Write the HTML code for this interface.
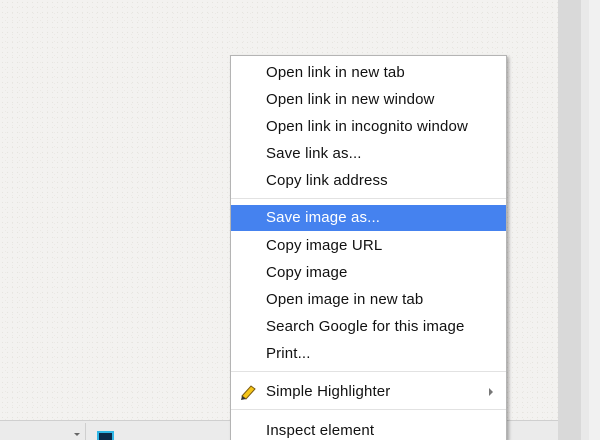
<!DOCTYPE html>
<html style="width:600px;height:440px;overflow:hidden"><head><meta charset="utf-8"><style>
*{margin:0;padding:0;box-sizing:border-box}
body{width:600px;height:440px;overflow:hidden;position:relative;background:#f1f0ee;font-family:"Liberation Sans",sans-serif}
.tex{position:absolute;left:0;top:0;width:558px;height:420px;background:#f3f2f0;
background-image:radial-gradient(#e6e4df 0.5px,transparent 0.8px),radial-gradient(#ebe9e5 0.5px,transparent 0.8px);
background-size:5px 5px,7px 7px;background-position:0 0,2px 3px}
.s1{position:absolute;left:558px;top:0;width:23px;height:440px;background:#d9d9d9}
.s2{position:absolute;left:581px;top:0;width:8px;height:440px;background:#e9e9e9}
.s3{position:absolute;left:589px;top:0;width:11px;height:440px;background:#f1f1f1}
.bar{position:absolute;left:0;top:420px;width:558px;height:20px;background:#ebebeb;border-top:1px solid #cfcfcf}
.menu{position:absolute;left:230px;top:55px;width:277px;height:385px;background:#fff;border:1px solid #b4b4b4;border-bottom:none;box-shadow:2px 2px 3px rgba(0,0,0,.3)}
.it{position:absolute;left:0;width:275px;height:26px;line-height:26px;padding-left:35px;font-size:15px;letter-spacing:0.15px;color:#111}
.hl{background:#4582ef;color:#fff}
.sep{position:absolute;left:0;width:275px;height:1px;background:#e2e2e2}
</style></head><body>
<div class="tex"></div><div class="s1"></div><div class="s2"></div><div class="s3"></div>
<div class="bar">
<div style="position:absolute;left:85px;top:2px;width:1px;height:18px;background:#cfcfcf"></div>
<div style="position:absolute;left:74px;top:12px;border-left:3px solid transparent;border-right:3px solid transparent;border-top:3px solid #666"></div>
<div style="position:absolute;left:97px;top:10px;width:17px;height:12px;background:#0b2a4a;border:2px solid #2fb6e6"></div>
</div>
<div class="menu">
<div class="it" style="top:4px">Open link in new tab</div>
<div class="it" style="top:31px">Open link in new window</div>
<div class="it" style="top:58px">Open link in incognito window</div>
<div class="it" style="top:85px">Save link as...</div>
<div class="it" style="top:112px">Copy link address</div>
<div class="sep" style="top:142px"></div>
<div class="it hl" style="top:149px">Save image as...</div>
<div class="it" style="top:177px">Copy image URL</div>
<div class="it" style="top:204px">Copy image</div>
<div class="it" style="top:231px">Open image in new tab</div>
<div class="it" style="top:258px">Search Google for this image</div>
<div class="it" style="top:285px">Print...</div>
<div class="sep" style="top:315px"></div>
<div class="it" style="top:323px">Simple Highlighter</div>
<svg style="position:absolute;left:8px;top:327px" width="18" height="18" viewBox="0 0 18 18"><path d="M3 13 L12 3 L16 6 L7 16 Z" fill="#f5c518" stroke="#7a5a10" stroke-width="1"/><path d="M3 13 L7 16 L2 17 Z" fill="#333"/></svg>
<div style="position:absolute;left:258px;top:332px;border-top:4px solid transparent;border-bottom:4px solid transparent;border-left:4px solid #777"></div>
<div class="sep" style="top:353px"></div>
<div class="it" style="top:362px">Inspect element</div>
</div>
</body></html>
